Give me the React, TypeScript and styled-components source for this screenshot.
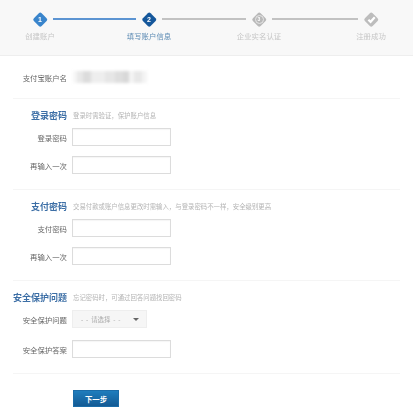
// App.tsx
import React from 'react';
import styled, { createGlobalStyle } from 'styled-components';

const GlobalStyle = createGlobalStyle`
  html, body {
    margin: 0;
    padding: 0;
    background: #fff;
  }
  body {
    font-family: "Noto Sans CJK SC", "Liberation Sans", sans-serif;
    overflow: hidden;
  }
`;

const Page = styled.div`
  width: 413px;
  height: 418px;
  filter: blur(0.45px);
`;

const Header = styled.div`
  height: 56px;
  box-sizing: border-box;
  padding: 12px 0 0 33px;
  display: flex;
  align-items: flex-start;
  background: #f8f8f8;
  border-bottom: 1px solid #eeeeee;
`;

const Step = styled.div`
  width: 14px;
  display: flex;
  flex-direction: column;
  align-items: center;
  flex: none;
`;

const Diamond = styled.div<{ $color: string }>`
  position: relative;
  width: 14px;
  height: 14px;
  display: flex;
  align-items: center;
  justify-content: center;
  color: #fff;
  font-size: 7px;
  font-weight: 700;
  line-height: 1;
  font-family: "Liberation Sans", sans-serif;
  span, svg {
    position: relative;
  }
  &::before {
    content: '';
    position: absolute;
    left: 1.75px;
    top: 1.75px;
    width: 10.5px;
    height: 10.5px;
    border-radius: 2px;
    transform: rotate(45deg);
    background: ${p => p.$color};
  }
`;

const Ringed = styled.span`
  width: 7px;
  height: 7px;
  border: 1px solid #e6e6e6;
  border-radius: 50%;
  display: flex;
  align-items: center;
  justify-content: center;
  font-size: 5px;
`;

const StepLabel = styled.div<{ $active?: boolean }>`
  margin-top: 4px;
  font-size: 7.4px;
  line-height: 11px;
  white-space: nowrap;
  color: ${p => (p.$active ? '#5f8db5' : '#c6c6c6')};
`;

const Connector = styled.div<{ $width: number; $done?: boolean }>`
  flex: none;
  width: ${p => p.$width}px;
  height: 2px;
  margin: 6px 6px 0;
  background: ${p => (p.$done ? '#5c94d2' : '#c2c2c2')};
`;

const Content = styled.div`
  margin: 0 13px;
`;

const NameRow = styled.div`
  height: 42px;
  display: grid;
  grid-template-columns: 54px 1fr;
  column-gap: 6px;
  align-items: center;
  border-bottom: 1px solid #f5f5f5;
`;

const Label = styled.div`
  text-align: right;
  font-size: 7.4px;
  color: #666;
  white-space: nowrap;
`;

const Smudge = styled.div`
  width: 74px;
  height: 12px;
  display: flex;
  filter: blur(1.4px);
`;

const SmudgePart = styled.div<{ $w: number; $shade: string }>`
  width: ${p => p.$w}px;
  background: ${p => p.$shade};
`;

const Section = styled.div`
  padding: 8px 0 15px;
  border-bottom: 1px solid #f5f5f5;
  display: flex;
  flex-direction: column;
`;

const TitleRow = styled.div`
  height: 16px;
  margin-bottom: 5px;
  display: grid;
  grid-template-columns: 54px 1fr;
  column-gap: 6px;
  align-items: center;
`;

const Title = styled.div`
  text-align: right;
  white-space: nowrap;
  font-size: 9px;
  font-weight: 700;
  color: #3d6fa6;
`;

const Hint = styled.div`
  font-size: 6.4px;
  color: #b4b4b4;
  white-space: nowrap;
`;

const Field = styled.div<{ $gap?: number }>`
  display: grid;
  grid-template-columns: 54px 1fr;
  column-gap: 5px;
  align-items: center;
  height: 18px;
  margin-bottom: ${p => p.$gap ?? 0}px;
`;

const Input = styled.input`
  width: 99px;
  height: 18px;
  box-sizing: border-box;
  padding: 0 4px;
  border: 1px solid #dcdcdc;
  outline: none;
  background: #fff;
  box-shadow: inset 0 1px 1px #f6f6f6;
`;

const SelectBox = styled.div`
  width: 75px;
  height: 18px;
  box-sizing: border-box;
  padding: 0 7px 0 8px;
  display: flex;
  align-items: center;
  justify-content: space-between;
  background: #f6f6f6;
  border: 1px solid #eeeeee;
  font-size: 6.4px;
  color: #aaa;
  white-space: pre;
`;

const Caret = styled.span`
  width: 0;
  height: 0;
  border-left: 3px solid transparent;
  border-right: 3px solid transparent;
  border-top: 3px solid #666;
`;

const Actions = styled.div`
  display: flex;
  padding: 16px 0 0 60px;
`;

const NextButton = styled.button`
  width: 46px;
  height: 17px;
  padding: 0;
  border: 1px solid #1b6ca8;
  background: linear-gradient(#1f7dbd, #135a94);
  color: #fff;
  font-family: inherit;
  font-size: 7.4px;
  font-weight: 700;
  line-height: 1;
`;

const smudge: [number, string][] = [
  [4, '#f6f6f6'],
  [6, '#e8e8e8'],
  [8, '#dcdcdc'],
  [14, '#eeeeee'],
  [10, '#e6e6e6'],
  [8, '#dedede'],
  [6, '#d8d8d8'],
  [5, '#f4f4f4'],
  [8, '#e8e8e8'],
  [5, '#f4f4f4'],
];

export default function App() {
  return (
    <Page>
      <GlobalStyle />
      <Header>
        <Step>
          <Diamond $color="#3a85cc"><span>1</span></Diamond>
          <StepLabel>创建账户</StepLabel>
        </Step>
        <Connector $width={83} $done />
        <Step>
          <Diamond $color="#15579b"><span>2</span></Diamond>
          <StepLabel $active>填写账户信息</StepLabel>
        </Step>
        <Connector $width={84} />
        <Step>
          <Diamond $color="#b9b9b9"><Ringed>3</Ringed></Diamond>
          <StepLabel>企业实名认证</StepLabel>
        </Step>
        <Connector $width={86} />
        <Step>
          <Diamond $color="#bdbdbd">
            <svg width="9" height="9" viewBox="0 0 10 10" fill="none" stroke="#fff" strokeWidth="2.4">
              <path d="M1.5 5.2 4 7.6 8.6 2.6" />
            </svg>
          </Diamond>
          <StepLabel>注册成功</StepLabel>
        </Step>
      </Header>
      <Content>
        <NameRow>
          <Label>支付宝账户名</Label>
          <Smudge>
            {smudge.map(([w, shade], i) => (
              <SmudgePart key={i} $w={w} $shade={shade} />
            ))}
          </Smudge>
        </NameRow>
        <Section>
          <TitleRow>
            <Title>登录密码</Title>
            <Hint>登录时需验证，保护账户信息</Hint>
          </TitleRow>
          <Field $gap={10}>
            <Label>登录密码</Label>
            <Input type="password" />
          </Field>
          <Field>
            <Label>再输入一次</Label>
            <Input type="password" />
          </Field>
        </Section>
        <Section>
          <TitleRow>
            <Title>支付密码</Title>
            <Hint>交易付款或账户信息更改时需输入，与登录密码不一样，安全级别更高</Hint>
          </TitleRow>
          <Field $gap={10}>
            <Label>支付密码</Label>
            <Input type="password" />
          </Field>
          <Field>
            <Label>再输入一次</Label>
            <Input type="password" />
          </Field>
        </Section>
        <Section>
          <TitleRow>
            <Title>安全保护问题</Title>
            <Hint>忘记密码时，可通过回答问题找回密码</Hint>
          </TitleRow>
          <Field $gap={12}>
            <Label>安全保护问题</Label>
            <SelectBox>
              {'-  -  请选择  -  -'}
              <Caret />
            </SelectBox>
          </Field>
          <Field>
            <Label>安全保护答案</Label>
            <Input type="text" />
          </Field>
        </Section>
        <Actions>
          <NextButton>下一步</NextButton>
        </Actions>
      </Content>
    </Page>
  );
}
